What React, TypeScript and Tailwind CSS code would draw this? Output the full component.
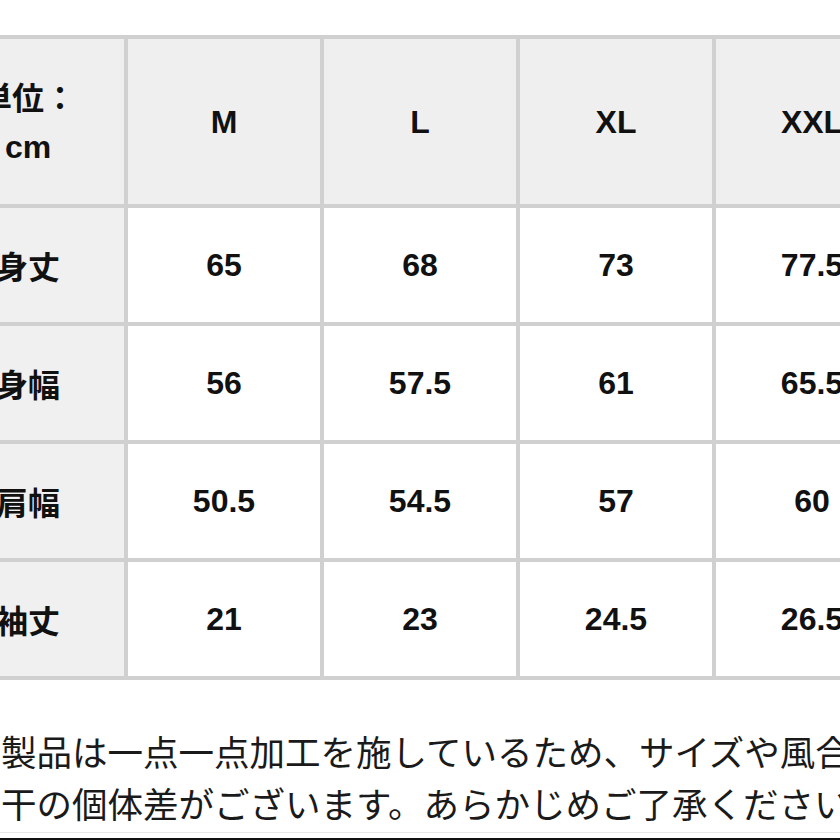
import React from "react";

const sizes = ["M", "L", "XL", "XXL"];
const rows: { label: string; values: string[] }[] = [
  { label: "身丈", values: ["65", "68", "73", "77.5"] },
  { label: "身幅", values: ["56", "57.5", "61", "65.5"] },
  { label: "肩幅", values: ["50.5", "54.5", "57", "60"] },
  { label: "袖丈", values: ["21", "23", "24.5", "26.5"] },
];

export default function App() {
  return (
    <div className="w-[840px] h-[840px] overflow-hidden bg-white text-[#111]">
      <div className="pt-[35px]">
        <div className="ml-[-72px] w-max bg-[#d0d0d0] p-[4px] grid grid-cols-[192px_192px_192px_192px_192px] grid-rows-[165px_114px_114px_114px_114px] gap-[4px]">
          <div className="bg-[#efefef] flex flex-col items-center justify-center text-[32px] font-bold leading-[51px] font-['Liberation_Sans','Noto_Sans_CJK_JP',sans-serif]">
            <div className="font-['Noto_Sans_CJK_JP','Liberation_Sans',sans-serif]">単位：</div>
            <div>cm</div>
          </div>
          {sizes.map((s) => (
            <div
              key={s}
              className="bg-[#efefef] flex items-center justify-center text-[32px] font-bold font-['Liberation_Sans','Noto_Sans_CJK_JP',sans-serif]"
            >
              {s}
            </div>
          ))}
          {rows.map((r) => (
            <React.Fragment key={r.label}>
              <div className="bg-[#f0f0f0] flex items-center justify-center text-[32px] font-bold font-['Noto_Sans_CJK_JP','Liberation_Sans',sans-serif]">
                {r.label}
              </div>
              {r.values.map((v, i) => (
                <div
                  key={i}
                  className="bg-white flex items-center justify-center text-[32px] font-bold font-['Liberation_Sans','Noto_Sans_CJK_JP',sans-serif]"
                >
                  {v}
                </div>
              ))}
            </React.Fragment>
          ))}
        </div>
      </div>
      <div className="mt-[45px] pl-[1px] text-[35.5px] leading-[52px] whitespace-nowrap text-[#1a1a1a] font-['Noto_Sans_CJK_JP','Liberation_Sans',sans-serif]">
        <div>製品は一点一点加工を施しているため、サイズや風合いに若</div>
        <div>干の個体差がございます。あらかじめご了承ください。</div>
      </div>
      <div className="mt-[3px] h-px bg-[#e6e6e6]" />
      <div className="mt-[5px] h-[2px] bg-[#111]" />
    </div>
  );
}
